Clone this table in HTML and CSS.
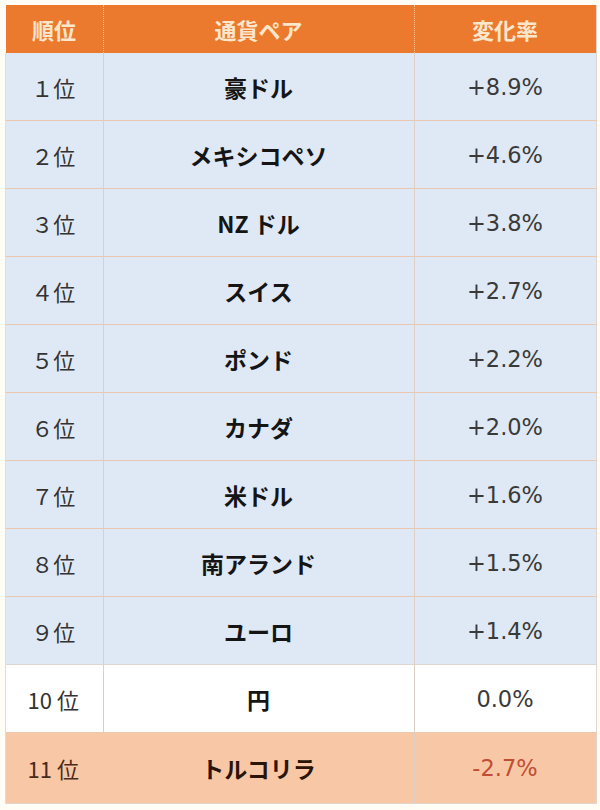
FILE: index.html
```html
<!DOCTYPE html>
<html lang="ja">
<head>
<meta charset="utf-8">
<link rel="stylesheet" href="styles.css">
</head>
<body>
<table class="rank">
  <thead>
    <tr><th class="c1">順位</th><th class="c2">通貨ペア</th><th class="c3">変化率</th></tr>
  </thead>
  <tbody>
    <tr class="blue"><td class="pos">１位</td><td class="name">豪ドル</td><td class="pct">+8.9%</td></tr>
    <tr class="blue"><td class="pos">２位</td><td class="name">メキシコペソ</td><td class="pct">+4.6%</td></tr>
    <tr class="blue"><td class="pos">３位</td><td class="name">NZ ドル</td><td class="pct">+3.8%</td></tr>
    <tr class="blue"><td class="pos">４位</td><td class="name">スイス</td><td class="pct">+2.7%</td></tr>
    <tr class="blue"><td class="pos">５位</td><td class="name">ポンド</td><td class="pct">+2.2%</td></tr>
    <tr class="blue"><td class="pos">６位</td><td class="name">カナダ</td><td class="pct">+2.0%</td></tr>
    <tr class="blue"><td class="pos">７位</td><td class="name">米ドル</td><td class="pct">+1.6%</td></tr>
    <tr class="blue"><td class="pos">８位</td><td class="name">南アランド</td><td class="pct">+1.5%</td></tr>
    <tr class="blue"><td class="pos">９位</td><td class="name">ユーロ</td><td class="pct">+1.4%</td></tr>
    <tr class="white"><td class="pos">10 位</td><td class="name">円</td><td class="pct">0.0%</td></tr>
    <tr class="peach"><td class="pos">11 位</td><td class="name">トルコリラ</td><td class="pct neg">-2.7%</td></tr>
  </tbody>
</table>
</body>
</html>
```

FILE: styles.css
```css
html, body {
  margin: 0;
  padding: 0;
  background: #fffdf6;
}
body {
  padding: 5px 0 0 5px;
  font-family: "Noto Sans CJK JP", "Noto Sans", sans-serif;
}
.rank {
  border-collapse: collapse;
  width: 589px;
  table-layout: fixed;
  border-right: 1px solid #e2d6cc;
  border-bottom: 1px solid #e2d6cc;
}
.rank th {
  background: #ec7a2e;
  color: #fbe7cc;
  font-size: 22px;
  font-weight: 700;
  height: 48px;
  padding: 0;
  text-align: center;
  border-left: 1px dotted #f8c090;
}
.rank th.c1 { width: 97px; border-left: none; }
.rank th.c2 { width: 310px; }
.rank th.c3 { width: 181px; }
.rank td {
  height: 67px;
  padding: 0;
  text-align: center;
  font-size: 22px;
  border-top: 1px solid #ecc7b0;
  border-left: 1px solid #dccfc6;
  color: #333;
}
.rank td.pos { border-left: 1px solid #ecd9c8; padding-right: 2px; }
.rank tbody tr:first-child td { border-top: none; }
.rank tbody tr:last-child td { height: 70px; }
.rank td.name {
  font-weight: 700;
  color: #151515;
  font-size: 23px;
}
.rank td.pct {
  color: #3a3a3a;
  font-family: "DejaVu Sans", "Noto Sans CJK JP", sans-serif;
  font-size: 22.5px;
}
.rank td.neg { color: #c24d35; }
.blue td { background: #dfe9f5; }
.white td { background: #ffffff; border-top-color: #ddd6d0; }
.peach td { background: #f8c8a6; color: #4a2a1a; }
.peach td.name { color: #2a1408; }
```
